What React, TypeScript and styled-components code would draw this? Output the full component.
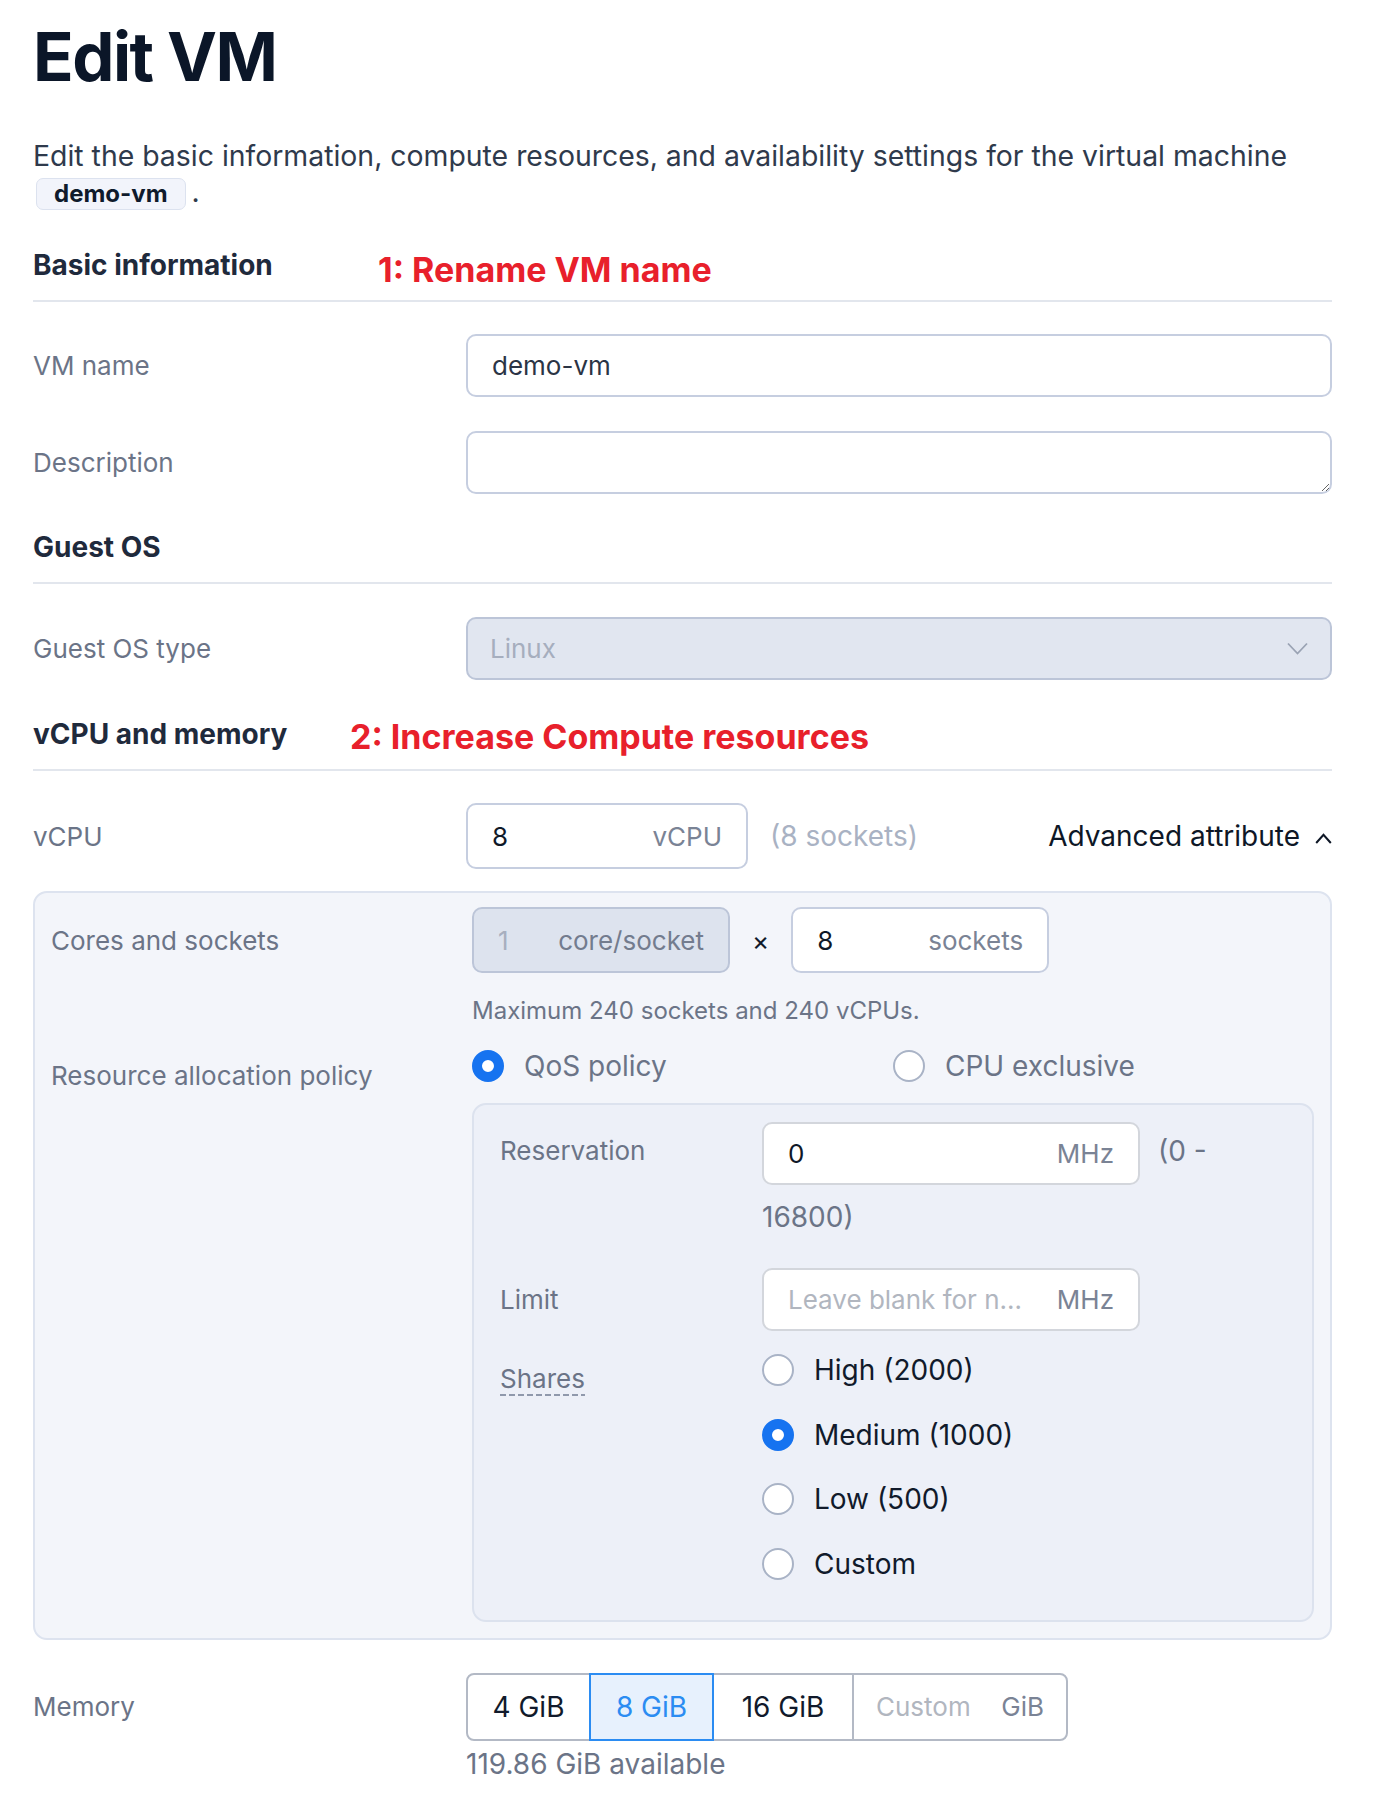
import React from 'react';
import styled, { createGlobalStyle } from 'styled-components';

const GlobalStyle = createGlobalStyle`
  html, body {
    margin: 0;
    padding: 0;
    background: #ffffff;
  }
  body {
    font-family: Inter, "Noto Sans", "Liberation Sans", sans-serif;
    -webkit-font-smoothing: antialiased;
  }
  *, *::before, *::after {
    box-sizing: border-box;
  }
`;

type Tone = 'outline' | 'disabled' | 'neutral';

const toneBorder: Record<Tone, string> = {
  outline: '#c6cee0',
  disabled: '#bcc5d8',
  neutral: '#d3d6dc',
};

const toneBg: Record<Tone, string> = {
  outline: '#ffffff',
  disabled: '#dde3ee',
  neutral: '#ffffff',
};

const Page = styled.main`
  width: 1299px;
  margin-left: 33px;
  padding: 17px 0 10px;
`;

const Title = styled.h1`
  margin: 0;
  font-size: 67px;
  line-height: 80px;
  font-weight: 700;
  letter-spacing: -1.5px;
  color: #0b1628;
`;

const Intro = styled.p`
  margin: 41px 0 0;
  font-size: 28.4px;
  line-height: 36px;
  color: #2f3a4c;
`;

const NameTag = styled.span`
  display: inline-block;
  height: 32px;
  margin: 0 6px 0 3px;
  padding: 0 17px;
  border: 1px solid #dce2ef;
  border-radius: 7px;
  background: #f2f4fb;
  font-size: 24px;
  line-height: 30px;
  font-weight: 700;
  color: #0f1a2c;
  vertical-align: middle;
`;

const SectionHeader = styled.div<{ $gap: number }>`
  position: relative;
  margin-top: ${p => p.$gap}px;
  padding-bottom: 17px;
  border-bottom: 2px solid #e2e6ed;
`;

const SectionTitle = styled.h2`
  margin: 0;
  font-size: 28px;
  line-height: 36px;
  font-weight: 700;
  color: #1f2a3c;
`;

const Annotation = styled.span<{ $left: number; $top: number }>`
  position: absolute;
  left: ${p => p.$left}px;
  top: ${p => p.$top}px;
  font-size: 34px;
  line-height: 40px;
  font-weight: 700;
  color: #e8202b;
  white-space: nowrap;
`;

const FieldRow = styled.div<{ $gap?: number }>`
  display: grid;
  grid-template-columns: 1fr 2fr;
  align-items: start;
  margin-top: ${p => p.$gap ?? 0}px;
`;

const FieldLabel = styled.div<{ $h: number }>`
  display: flex;
  align-items: center;
  min-height: ${p => p.$h}px;
  font-size: 26px;
  color: #6b7487;
`;

const InputBox = styled.div<{ $tone?: Tone; $w?: number; $h?: number }>`
  display: inline-flex;
  align-items: center;
  vertical-align: middle;
  flex: none;
  width: ${p => (p.$w ? `${p.$w}px` : '100%')};
  height: ${p => p.$h ?? 63}px;
  padding: 0 24px;
  border: 2px solid ${p => toneBorder[p.$tone ?? 'outline']};
  border-radius: 10px;
  background: ${p => toneBg[p.$tone ?? 'outline']};
  line-height: normal;
`;

const TextInput = styled.input<{ $color?: string; $w?: number }>`
  flex: ${p => (p.$w ? 'none' : '1')};
  width: ${p => (p.$w ? `${p.$w}px` : 'auto')};
  min-width: 0;
  height: 100%;
  padding: 0;
  border: 0;
  outline: 0;
  background: transparent;
  font-family: inherit;
  font-size: 26px;
  color: ${p => p.$color ?? '#0f1828'};
  text-overflow: ellipsis;

  &::placeholder {
    color: #b1b6bf;
    opacity: 1;
  }
  &:disabled {
    color: #a7afbf;
    -webkit-text-fill-color: #a7afbf;
  }
`;

const Suffix = styled.span<{ $color?: string }>`
  flex: none;
  margin-left: auto;
  padding-left: 12px;
  font-size: 26px;
  color: ${p => p.$color ?? '#7a8395'};
`;

const TextArea = styled.textarea`
  display: block;
  width: 100%;
  height: 63px;
  padding: 14px 24px;
  resize: vertical;
  border: 2px solid #c6cee0;
  border-radius: 10px;
  outline: 0;
  font-family: inherit;
  font-size: 26px;
  color: #2b3445;
`;

const SelectBox = styled.div`
  display: flex;
  align-items: center;
  justify-content: space-between;
  height: 63px;
  padding: 0 22px;
  border: 2px solid #bcc5d8;
  border-radius: 10px;
  background: #e1e6f0;
  font-size: 26px;
  color: #a6aebe;
`;

const InlineControls = styled.div<{ $gap?: number }>`
  display: flex;
  align-items: center;
  gap: ${p => p.$gap ?? 0}px;
`;

const Hint = styled.span`
  margin-left: 22px;
  font-size: 28px;
  color: #a9b2c3;
`;

const AdvancedToggle = styled.button`
  display: flex;
  align-items: center;
  gap: 15px;
  margin-left: auto;
  padding: 0;
  border: 0;
  background: none;
  font-family: inherit;
  font-size: 28px;
  color: #0e1726;
  cursor: pointer;

  svg {
    margin-top: 4px;
  }
`;

const AdvancedPanel = styled.section`
  margin-top: 22px;
  padding: 14px 16px 16px;
  border: 2px solid #dde3ef;
  border-radius: 14px;
  background: #f3f5fa;
`;

const Multiply = styled.span`
  font-size: 26px;
  color: #111a2b;
`;

const HelpText = styled.div<{ $gap: number; $size?: number }>`
  margin-top: ${p => p.$gap}px;
  font-size: ${p => p.$size ?? 24}px;
  line-height: 32px;
  color: #6b7487;
`;

const RadioGrid = styled.div<{ $cols: number }>`
  display: grid;
  grid-template-columns: repeat(${p => p.$cols}, 1fr);
  row-gap: 16.5px;
`;

const RadioOption = styled.label<{ $dark?: boolean }>`
  display: flex;
  align-items: center;
  gap: 20px;
  height: 48px;
  font-size: 28px;
  color: ${p => (p.$dark ? '#111a2b' : '#6b7487')};
  cursor: pointer;
`;

const RadioMark = styled.span<{ $checked?: boolean }>`
  flex: none;
  width: 32px;
  height: 32px;
  border-radius: 50%;
  background: #ffffff;
  border: ${p => (p.$checked ? '10.5px solid #1673f0' : '2px solid #a9b3c6')};
`;

const InnerPanel = styled.div`
  margin-top: 13px;
  padding: 14px 26px 32px;
  border: 2px solid #dce2ee;
  border-radius: 14px;
  background: #edf0f8;
`;

const WrapCell = styled.div`
  font-size: 28px;
  line-height: 64px;
  color: #6b7487;

  ${InputBox} {
    margin-right: 18px;
  }
`;

const DottedTerm = styled.span`
  display: inline-block;
  line-height: 30px;
  padding-bottom: 2px;
  background: linear-gradient(to right, #9099ac 66%, transparent 0) left bottom / 9px 2px repeat-x;
`;

const SegmentGroup = styled.div`
  display: flex;
  height: 68px;
`;

const Segment = styled.button<{ $w: number; $active?: boolean }>`
  position: relative;
  z-index: ${p => (p.$active ? 1 : 0)};
  display: flex;
  align-items: center;
  justify-content: center;
  width: ${p => p.$w}px;
  height: 100%;
  margin-left: -2px;
  padding: 0;
  border: 2px solid ${p => (p.$active ? '#2b8cf2' : '#b3b9c5')};
  background: ${p => (p.$active ? '#e7f1fd' : '#ffffff')};
  color: ${p => (p.$active ? '#2b8cf2' : '#111a2b')};
  font-family: inherit;
  font-size: 28px;
  cursor: pointer;

  &:first-child {
    margin-left: 0;
    border-radius: 8px 0 0 8px;
  }
`;

const CustomSegment = styled.div<{ $w: number }>`
  display: flex;
  align-items: center;
  width: ${p => p.$w}px;
  height: 100%;
  margin-left: -2px;
  padding: 0 22px;
  border: 2px solid #b3b9c5;
  border-radius: 0 8px 8px 0;
  background: #ffffff;
`;

const ChevronDown = () => (
  <svg width="21" height="13" viewBox="0 0 21 13">
    <path d="M1 1.5 L10.5 11.5 L20 1.5" fill="none" stroke="#9aa3b4" strokeWidth="1.8" />
  </svg>
);

const ChevronUp = () => (
  <svg width="17" height="11" viewBox="0 0 17 11">
    <path d="M1.2 10 L8.5 1.8 L15.8 10" fill="none" stroke="#0e1726" strokeWidth="2" />
  </svg>
);

const shares = [
  { label: 'High (2000)', checked: false },
  { label: 'Medium (1000)', checked: true },
  { label: 'Low (500)', checked: false },
  { label: 'Custom', checked: false },
];

const memoryOptions = [
  { label: '4 GiB', w: 125 },
  { label: '8 GiB', w: 125, active: true },
  { label: '16 GiB', w: 142 },
];

const App = () => {
  return (
    <>
      <GlobalStyle />
      <Page>
        <Title>Edit VM</Title>
        <Intro>
          Edit the basic information, compute resources, and availability settings for the virtual machine{' '}
          <NameTag>demo-vm</NameTag>.
        </Intro>

        <SectionHeader $gap={37}>
          <SectionTitle>Basic information</SectionTitle>
          <Annotation $left={345} $top={3}>1: Rename VM name</Annotation>
        </SectionHeader>

        <FieldRow $gap={32}>
          <FieldLabel $h={63}>VM name</FieldLabel>
          <InputBox>
            <TextInput defaultValue="demo-vm" $color="#2b3445" />
          </InputBox>
        </FieldRow>

        <FieldRow $gap={34}>
          <FieldLabel $h={63}>Description</FieldLabel>
          <TextArea />
        </FieldRow>

        <SectionHeader $gap={35}>
          <SectionTitle>Guest OS</SectionTitle>
        </SectionHeader>

        <FieldRow $gap={33}>
          <FieldLabel $h={63}>Guest OS type</FieldLabel>
          <SelectBox>
            <span>Linux</span>
            <ChevronDown />
          </SelectBox>
        </FieldRow>

        <SectionHeader $gap={36}>
          <SectionTitle>vCPU and memory</SectionTitle>
          <Annotation $left={317} $top={1}>2: Increase Compute resources</Annotation>
        </SectionHeader>

        <FieldRow $gap={32}>
          <FieldLabel $h={66}>vCPU</FieldLabel>
          <InlineControls>
            <InputBox $w={282} $h={66}>
              <TextInput defaultValue="8" />
              <Suffix>vCPU</Suffix>
            </InputBox>
            <Hint>(8 sockets)</Hint>
            <AdvancedToggle type="button">
              Advanced attribute
              <ChevronUp />
            </AdvancedToggle>
          </InlineControls>
        </FieldRow>

        <AdvancedPanel>
          <FieldRow>
            <FieldLabel $h={66}>Cores and sockets</FieldLabel>
            <div>
              <InlineControls $gap={22}>
                <InputBox $tone="disabled" $w={258} $h={66}>
                  <TextInput defaultValue="1" disabled />
                  <Suffix $color="#737c8e">core/socket</Suffix>
                </InputBox>
                <Multiply>×</Multiply>
                <InputBox $w={258} $h={66}>
                  <TextInput defaultValue="8" />
                  <Suffix>sockets</Suffix>
                </InputBox>
              </InlineControls>
              <HelpText $gap={22}>Maximum 240 sockets and 240 vCPUs.</HelpText>
            </div>
          </FieldRow>

          <FieldRow $gap={15}>
            <FieldLabel $h={66}>Resource allocation policy</FieldLabel>
            <div>
              <RadioGrid $cols={2}>
                <RadioOption>
                  <RadioMark $checked />
                  QoS policy
                </RadioOption>
                <RadioOption>
                  <RadioMark />
                  CPU exclusive
                </RadioOption>
              </RadioGrid>

              <InnerPanel>
                <FieldRow>
                  <FieldLabel $h={63}>Reservation</FieldLabel>
                  <WrapCell>
                    <InputBox $tone="neutral" $w={378}>
                      <TextInput defaultValue="0" />
                      <Suffix>MHz</Suffix>
                    </InputBox>
                    (0 - 16800)
                  </WrapCell>
                </FieldRow>

                <FieldRow $gap={19}>
                  <FieldLabel $h={63}>Limit</FieldLabel>
                  <InputBox $tone="neutral" $w={378}>
                    <TextInput placeholder="Leave blank for no limit" $w={245} />
                    <Suffix>MHz</Suffix>
                  </InputBox>
                </FieldRow>

                <FieldRow $gap={15}>
                  <FieldLabel $h={68}>
                    <DottedTerm>Shares</DottedTerm>
                  </FieldLabel>
                  <RadioGrid $cols={1}>
                    {shares.map(s => (
                      <RadioOption key={s.label} $dark>
                        <RadioMark $checked={s.checked} />
                        {s.label}
                      </RadioOption>
                    ))}
                  </RadioGrid>
                </FieldRow>
              </InnerPanel>
            </div>
          </FieldRow>
        </AdvancedPanel>

        <FieldRow $gap={33}>
          <FieldLabel $h={68}>Memory</FieldLabel>
          <div>
            <SegmentGroup>
              {memoryOptions.map(m => (
                <Segment key={m.label} type="button" $w={m.w} $active={m.active}>
                  {m.label}
                </Segment>
              ))}
              <CustomSegment $w={216}>
                <TextInput placeholder="Custom" />
                <Suffix>GiB</Suffix>
              </CustomSegment>
            </SegmentGroup>
            <HelpText $gap={7} $size={28}>119.86 GiB available</HelpText>
          </div>
        </FieldRow>
      </Page>
    </>
  );
};

export default App;
